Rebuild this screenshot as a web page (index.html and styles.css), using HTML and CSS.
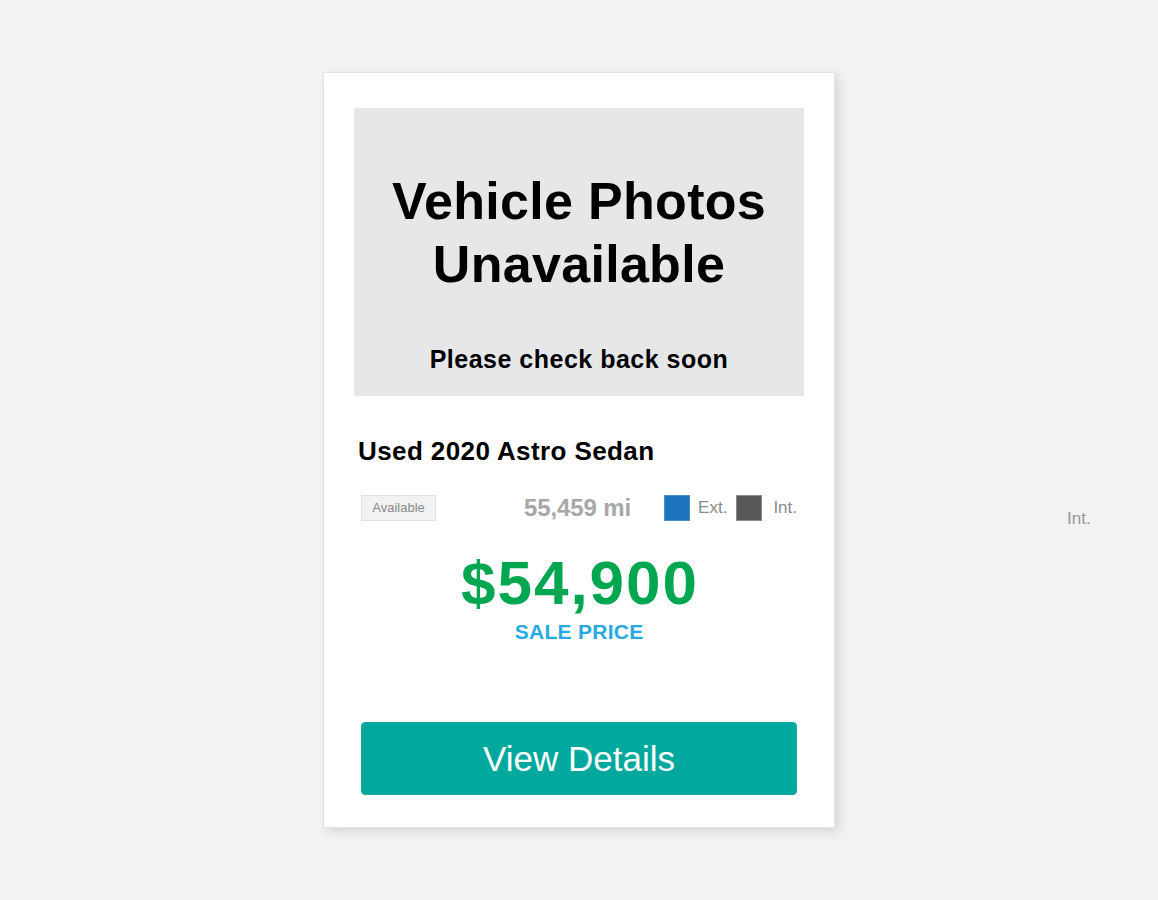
FILE: index.html
```html
<!DOCTYPE html>
<html lang="en">
<head>
<meta charset="utf-8">
<title>Used 2020 Astro Sedan</title>
<link rel="stylesheet" href="styles.css">
</head>
<body>
<main class="page">
  <article class="card">
    <div class="photo">
      <h2 class="photo-title">Vehicle Photos<br>Unavailable</h2>
      <p class="photo-sub">Please check back soon</p>
    </div>
    <h3 class="title">Used 2020 Astro Sedan</h3>
    <div class="meta">
      <span class="badge">Available</span>
      <span class="miles">55,459 mi</span>
      <span class="swatch swatch-ext"></span>
      <span class="swatch-label">Ext.</span>
      <span class="swatch swatch-int"></span>
      <span class="swatch-label label-int">Int.</span>
    </div>
    <div class="price">$54,900</div>
    <div class="price-label">SALE PRICE</div>
    <a class="btn" href="#">View Details</a>
  </article>
  <span class="stray">Int.</span>
</main>
</body>
</html>
```

FILE: styles.css
```css
html, body {
  margin: 0;
  padding: 0;
  background: #f2f2f2;
  font-family: "Liberation Sans", Arial, sans-serif;
}

.page {
  position: relative;
  display: flex;
  justify-content: center;
  padding-top: 72px;
  min-height: 900px;
  box-sizing: border-box;
}

.card {
  width: 512px;
  box-sizing: border-box;
  background: #fff;
  border: 1px solid #e3e3e3;
  padding: 35px 30px 32px;
  box-shadow: 4px 4px 10px rgba(0, 0, 0, 0.11);
  align-self: flex-start;
}

.photo {
  height: 288px;
  box-sizing: border-box;
  background: #e6e7e9;
  text-align: center;
  padding-top: 62px;
  color: #000;
}

.photo-title {
  margin: 0;
  font-size: 52px;
  line-height: 63px;
  font-weight: 700;
  letter-spacing: 0.3px;
}

.photo-sub {
  margin: 48px 0 0;
  font-size: 25px;
  line-height: 30px;
  font-weight: 700;
  letter-spacing: 0.5px;
}

.title {
  margin: 39px 0 0;
  padding-left: 4px;
  font-size: 26px;
  line-height: 32px;
  font-weight: 700;
  color: #000;
  letter-spacing: 0.4px;
}

.meta {
  margin-top: 28px;
  padding: 0 7px;
  height: 26px;
  display: flex;
  align-items: center;
}

.badge {
  width: 75px;
  height: 26px;
  box-sizing: border-box;
  border: 1px solid #e1e1e1;
  background: #f2f2f2;
  color: #8a8a8a;
  font-size: 13px;
  line-height: 24px;
  text-align: center;
}

.miles {
  margin-left: auto;
  font-size: 24px;
  line-height: 26px;
  font-weight: 700;
  color: #a7a7a7;
  letter-spacing: -0.1px;
}

.swatch {
  width: 26px;
  height: 26px;
  box-sizing: border-box;
}

.swatch-ext {
  margin-left: 33px;
  background: #1b74bd;
  border: 1px solid #4a8fca;
}

.swatch-int {
  margin-left: 9px;
  background: #58585a;
  border: 1px solid #8a8a8c;
}

.swatch-label {
  margin-left: 8px;
  font-size: 17px;
  line-height: 26px;
  color: #8a8a8a;
}

.label-int {
  margin-left: 11px;
}

.price {
  margin-top: 32px;
  text-align: center;
  font-size: 62px;
  line-height: 60px;
  font-weight: 700;
  color: #00a650;
  letter-spacing: 2px;
  text-indent: 2px;
}

.price-label {
  margin-top: 7px;
  text-align: center;
  font-size: 21px;
  line-height: 24px;
  font-weight: 700;
  color: #27aae1;
  letter-spacing: 0.3px;
  text-indent: 0.3px;
}

.btn {
  display: block;
  margin: 78px 7px 0;
  height: 73px;
  box-sizing: border-box;
  border: 1px solid #19a89f;
  border-radius: 4px;
  background: #00a89d;
  color: #fff;
  text-align: center;
  text-decoration: none;
  font-size: 35px;
  line-height: 71px;
  font-weight: 400;
}

.stray {
  position: absolute;
  left: 1067px;
  top: 510px;
  font-size: 17px;
  line-height: 17px;
  color: #999;
}
```
